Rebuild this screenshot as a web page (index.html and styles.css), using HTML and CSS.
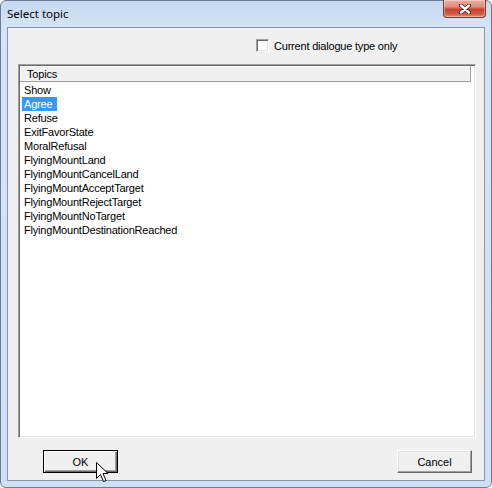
FILE: index.html
```html
<!DOCTYPE html>
<html lang="en">
<head>
<meta charset="utf-8">
<title>Select topic</title>
<link rel="stylesheet" href="styles.css">
</head>
<body>
<div class="window">
  <div class="titlebar">
    <span class="title">Select topic</span>
    <button class="close" aria-label="Close">
      <svg width="14" height="10" viewBox="0 0 14 10">
        <path d="M3 1.5 L11 8.5 M11 1.5 L3 8.5" stroke="#5a1f1a" stroke-width="4.2" stroke-linecap="round"/>
        <path d="M3 1.5 L11 8.5 M11 1.5 L3 8.5" stroke="#ffffff" stroke-width="2.4" stroke-linecap="round"/>
      </svg>
    </button>
  </div>
  <div class="client">
    <label class="option">
      <span class="check"></span>
      <span class="option-text">Current dialogue type only</span>
    </label>
    <div class="listbox">
      <div class="header"><span class="col">Topics</span></div>
      <ul class="items">
        <li><span>Show</span></li>
        <li class="selected"><span>Agree</span></li>
        <li><span>Refuse</span></li>
        <li><span>ExitFavorState</span></li>
        <li><span>MoralRefusal</span></li>
        <li><span>FlyingMountLand</span></li>
        <li><span>FlyingMountCancelLand</span></li>
        <li><span>FlyingMountAcceptTarget</span></li>
        <li><span>FlyingMountRejectTarget</span></li>
        <li><span>FlyingMountNoTarget</span></li>
        <li><span>FlyingMountDestinationReached</span></li>
      </ul>
    </div>
    <div class="buttons">
      <button class="btn default">OK</button>
      <button class="btn">Cancel</button>
    </div>
  </div>
  <svg class="cursor" width="13" height="21" viewBox="0 0 13 21">
    <path d="M0.5 0.5 L0.5 16.5 L4.5 12.5 L7.5 19.5 L10 18.5 L7 11.5 L12 11.5 Z" fill="#ffffff" stroke="#000000" stroke-width="1" stroke-linejoin="miter"/>
  </svg>
</div>
</body>
</html>
```
FILE: styles.css
```css
html, body {
  margin: 0;
  padding: 0;
  background: #ffffff;
}

.window {
  position: relative;
  box-sizing: border-box;
  width: 492px;
  height: 488px;
  display: flex;
  flex-direction: column;
  border: 1px solid #6b7d96;
  border-radius: 6px;
  background: linear-gradient(180deg, #c6d9f0 0px, #d5e4f6 26px, #d0e0f4 100%);
  font-family: "Liberation Sans", Arial, sans-serif;
  font-size: 11px;
  color: #000;
}

/* caption */
.titlebar {
  flex: none;
  height: 26px;
  display: flex;
  justify-content: space-between;
  align-items: flex-start;
  padding-left: 6px;
  padding-right: 5px;
}

.title {
  font-family: "Noto Sans", "Open Sans", sans-serif;
  font-size: 11.5px;
  line-height: 16px;
  margin-top: 5px;
  color: #000;
}

.close {
  margin-top: -1px;
  width: 43px;
  height: 18px;
  padding: 0;
  border: 1px solid #7a3a33;
  border-top: none;
  border-radius: 0 0 4px 4px;
  background: linear-gradient(180deg, #eab0a3 0%, #de8d7b 40%, #c7432e 55%, #cf5a43 80%, #e08a6e 100%);
  box-shadow: inset 0 0 0 1px rgba(255, 255, 255, 0.35);
  display: flex;
  align-items: center;
  justify-content: center;
}

/* dialog body */
.client {
  flex: 1;
  margin: 0 6px 6px 6px;
  border: 1px solid #8496ad;
  background: #f0f0f0;
  display: flex;
  flex-direction: column;
}

.option {
  display: flex;
  align-items: center;
  height: 13px;
  margin-top: 11px;
  padding-left: 248px;
}

.check {
  box-sizing: border-box;
  width: 13px;
  height: 13px;
  background: #ffffff;
  border: 1px solid;
  border-color: #a0a0a0 #ffffff #ffffff #a0a0a0;
  box-shadow: inset 1px 1px 0 #696969, inset -1px -1px 0 #e3e3e3;
}

.option-text {
  margin-left: 5px;
  letter-spacing: -0.2px;
}

.listbox {
  box-sizing: border-box;
  margin: 12px 0 0 10px;
  width: 458px;
  height: 374px;
  padding: 1px;
  background: #ffffff;
  border: 1px solid;
  border-color: #a0a0a0 #ffffff #ffffff #a0a0a0;
  box-shadow: inset 1px 1px 0 #696969, inset -1px -1px 0 #e3e3e3;
}

.header {
  box-sizing: border-box;
  width: 451px;
  height: 16px;
  background: #f0f0f0;
  border-bottom: 1px solid #a0a0a0;
  border-right: 1px solid #a0a0a0;
  box-shadow: inset 1px 1px 0 #ffffff;
  display: flex;
  align-items: center;
}

.col {
  padding-left: 7px;
  letter-spacing: -0.2px;
}

.items {
  list-style: none;
  margin: 0;
  padding: 1px 0 0 0;
}

.items li {
  height: 14px;
  line-height: 14px;
  padding-left: 2px;
}

.items li span {
  display: inline-block;
  padding: 0 5px 0 2px;
  letter-spacing: -0.2px;
}

.items li.selected span {
  background: #3399ff;
  color: #ffffff;
}

.buttons {
  display: flex;
  justify-content: space-between;
  margin-top: 12px;
  padding: 0 12px 0 35px;
}

.btn {
  box-sizing: border-box;
  width: 75px;
  height: 23px;
  padding: 0;
  background: #f0f0f0;
  font-family: "Liberation Sans", Arial, sans-serif;
  font-size: 11px;
  color: #000;
  border: 1px solid;
  border-color: #ffffff #696969 #696969 #ffffff;
  box-shadow: inset -1px -1px 0 #a0a0a0, inset 1px 1px 0 #e3e3e3;
}

.btn.default {
  border: 1px solid #000000;
  box-shadow: inset 1px 1px 0 #ffffff, inset -1px -1px 0 #696969, inset -2px -2px 0 #a0a0a0;
}

.cursor {
  position: absolute;
  left: 95px;
  top: 461px;
}
```
